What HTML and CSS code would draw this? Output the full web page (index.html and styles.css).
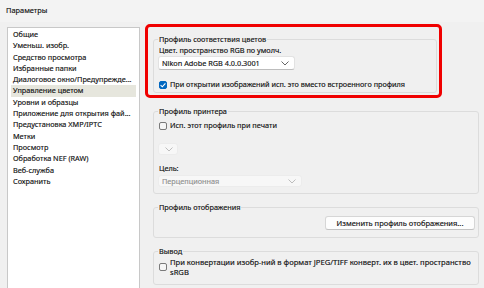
FILE: index.html
```html
<!DOCTYPE html>
<html lang="ru">
<head>
<meta charset="utf-8">
<title>Параметры</title>
<link rel="stylesheet" href="styles.css">
</head>
<body>
<div class="titlebar">Параметры</div>
<div class="main">
  <ul class="nav">
    <li>Общие</li>
    <li>Уменьш. изобр.</li>
    <li>Средство просмотра</li>
    <li>Избранные папки</li>
    <li>Диалоговое окно/Предупрежде...</li>
    <li class="sel">Управление цветом</li>
    <li>Уровни и образцы</li>
    <li>Приложение для открытия фай...</li>
    <li>Предустановка XMP/IPTC</li>
    <li>Метки</li>
    <li>Просмотр</li>
    <li>Обработка NEF (RAW)</li>
    <li>Веб-служба</li>
    <li>Сохранить</li>
  </ul>
  <div class="panel">
    <div class="highlight">
      <div class="group g1">
        <div class="gtitle">Профиль соответствия цветов</div>
        <div class="label">Цвет. пространство RGB по умолч.</div>
        <div class="select s1"><span>Nikon Adobe RGB 4.0.0.3001</span><svg class="chev" width="8" height="5" viewBox="0 0 8 5"><polyline points="0.5,0.5 4,4 7.5,0.5" fill="none" stroke="#555" stroke-width="0.9"/></svg></div>
        <div class="check-row cr1"><span class="cb checked"><svg width="8" height="8" viewBox="0 0 8 8"><polyline points="1.6,4.2 3.3,5.8 6.4,2.3" fill="none" stroke="#fff" stroke-width="1.1"/></svg></span><span class="cr1-text">При открытии изображений исп. это вместо встроенного профиля</span></div>
      </div>
    </div>
    <div class="group g2">
      <div class="gtitle">Профиль принтера</div>
      <div class="check-row"><span class="cb"></span><span>Исп. этот профиль при печати</span></div>
      <div class="select small disabled"><svg class="chev" width="8" height="5" viewBox="0 0 8 5"><polyline points="0.5,0.5 4,4 7.5,0.5" fill="none" stroke="#b5b5b5" stroke-width="0.9"/></svg></div>
      <div class="label tlabel">Цель:</div>
      <div class="select s2 disabled"><span>Перцепционная</span><svg class="chev" width="8" height="5" viewBox="0 0 8 5"><polyline points="0.5,0.5 4,4 7.5,0.5" fill="none" stroke="#b5b5b5" stroke-width="0.9"/></svg></div>
    </div>
    <div class="group g3">
      <div class="gtitle">Профиль отображения</div>
      <div class="btn-row"><button class="btn">Изменить профиль отображения...</button></div>
    </div>
    <div class="group g4">
      <div class="gtitle">Вывод</div>
      <div class="check-row multi"><span class="cb"></span><span class="multi-text">При конвертации изобр-ний в формат JPEG/TIFF конверт. их в цвет. пространство sRGB</span></div>
    </div>
  </div>
</div>
</body>
</html>
```
FILE: styles.css
```css
* { box-sizing: border-box; }
html, body { margin: 0; padding: 0; }
body {
  width: 484px;
  height: 288px;
  overflow: hidden;
  background: #f0f0f0;
  font-family: "Noto Sans", "Open Sans", sans-serif;
  font-size: 7.3px;
  color: #111;
  -webkit-text-stroke: 0.15px currentColor;
}
.titlebar {
  height: 22px;
  line-height: 21px;
  padding-left: 6px;
  background: #f3f3f3;
  font-size: 7.4px;
}
.main {
  display: flex;
  align-items: flex-start;
  padding-left: 7px;
  padding-top: 5px;
}
.nav {
  list-style: none;
  margin: 0;
  padding: 1px 3px 0 3px;
  width: 133px;
  height: 261px;
  background: #fff;
  border: 1px solid #c8c8c8;
  border-bottom: none;
}
.nav li {
  line-height: 11.3px;
  height: 11.3px;
  padding-left: 2px;
  white-space: nowrap;
}
.nav li.sel { background: #e6e6dd; }
.panel {
  margin-left: 5px;
  display: flex;
  flex-direction: column;
  margin-top: -3px;
}
.highlight {
  width: 297px;
  border: 3px solid #f00000;
  border-radius: 5px;
  padding: 12px 2px 2px 5px;
}
.group {
  border: 1px solid #dcdcdc;
  border-radius: 3px;
  padding: 0 3px 0 4px;
  line-height: 11px;
}
.gtitle {
  margin-top: -6px;
  padding: 0 1px;
  width: fit-content;
  background: #f0f0f0;
  height: 11px;
}
.g1 { width: 284px; height: 54px; }
.g2, .g3, .g4 { margin-left: 8px; width: 326px; margin-top: 13px; }
.g2 { height: 83px; }
.g3 { height: 31px; }
.g4 { height: 34px; }
.label { padding-left: 1px; }
.select {
  display: flex;
  align-items: center;
  justify-content: space-between;
  height: 14px;
  background: #fff;
  border: 1px solid #e2e2e2;
  border-bottom-color: #bdbdbd;
  border-radius: 3px;
  padding: 0 5px 0 3px;
}
.select .chev { flex: none; }
.s1 { width: 137px; }
.select.disabled { background: #f7f7f7; border-color: #ececec; color: #8f8f8f; }
.small { width: 20px; height: 12px; margin-top: 12px; justify-content: flex-end; padding-right: 4px; }
.tlabel { margin-top: 8px; }
.s2 { width: 144px; height: 12px; margin-top: 1px; }
.check-row {
  display: flex;
  align-items: center;
  gap: 3px;
  padding-left: 1px;
}
.cr1 { margin-top: 9px; }
.cr1-text { font-size: 7.25px; }
.g2 .check-row { margin-top: 3px; }
.cb {
  flex: none;
  width: 8px;
  height: 8px;
  border: 1px solid #7a7a7a;
  border-radius: 2px;
  background: #f6f6f6;
  display: flex;
}
.cb.checked { background: #0067c0; border-color: #0067c0; }
.cb.checked svg { margin: -1px; }
.btn-row { display: flex; justify-content: flex-end; margin-top: 3px; }
.btn {
  font: inherit;
  font-size: 7.5px;
  color: inherit;
  width: 150px;
  height: 14px;
  padding: 0;
  background: #fdfdfd;
  border: 1px solid #d6d6d6;
  border-bottom-color: #c2c2c2;
  border-radius: 3px;
  line-height: 12px;
}
.multi { margin-top: 0; }
.multi-text { width: 308px; line-height: 10px; font-size: 7.6px; }
```
